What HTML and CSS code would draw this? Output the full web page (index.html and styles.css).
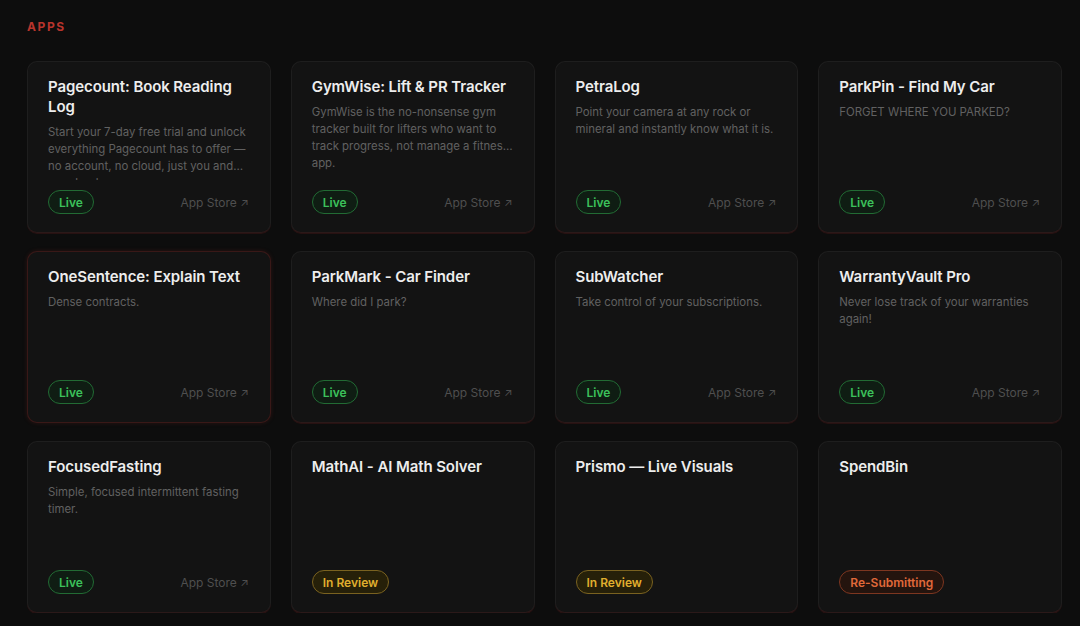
FILE: index.html
```html
<!DOCTYPE html>
<html lang="en">
<head>
<meta charset="utf-8">
<title>Apps</title>
<link rel="stylesheet" href="styles.css">
</head>
<body>
<main class="page">
  <h2 class="section-label">APPS</h2>
  <div class="grid">
    <article class="card">
      <h3 class="title">Pagecount: Book Reading Log</h3>
      <p class="desc">Start your 7-day free trial and unlock everything Pagecount has to offer — no account, no cloud, just you and your books.</p>
      <div class="foot"><span class="badge live">Live</span><a class="store">App Store <span class="arrow">↗</span></a></div>
    </article>
    <article class="card">
      <h3 class="title">GymWise: Lift &amp; PR Tracker</h3>
      <p class="desc">GymWise is the no-nonsense gym tracker built for lifters who want to track progress, not manage a fitness app.</p>
      <div class="foot"><span class="badge live">Live</span><a class="store">App Store <span class="arrow">↗</span></a></div>
    </article>
    <article class="card">
      <h3 class="title">PetraLog</h3>
      <p class="desc">Point your camera at any rock or mineral and instantly know what it is.</p>
      <div class="foot"><span class="badge live">Live</span><a class="store">App Store <span class="arrow">↗</span></a></div>
    </article>
    <article class="card">
      <h3 class="title">ParkPin - Find My Car</h3>
      <p class="desc">FORGET WHERE YOU PARKED?</p>
      <div class="foot"><span class="badge live">Live</span><a class="store">App Store <span class="arrow">↗</span></a></div>
    </article>

    <article class="card active">
      <h3 class="title">OneSentence: Explain Text</h3>
      <p class="desc">Dense contracts.</p>
      <div class="foot"><span class="badge live">Live</span><a class="store">App Store <span class="arrow">↗</span></a></div>
    </article>
    <article class="card">
      <h3 class="title">ParkMark - Car Finder</h3>
      <p class="desc">Where did I park?</p>
      <div class="foot"><span class="badge live">Live</span><a class="store">App Store <span class="arrow">↗</span></a></div>
    </article>
    <article class="card">
      <h3 class="title">SubWatcher</h3>
      <p class="desc">Take control of your subscriptions.</p>
      <div class="foot"><span class="badge live">Live</span><a class="store">App Store <span class="arrow">↗</span></a></div>
    </article>
    <article class="card">
      <h3 class="title">WarrantyVault Pro</h3>
      <p class="desc">Never lose track of your warranties again!</p>
      <div class="foot"><span class="badge live">Live</span><a class="store">App Store <span class="arrow">↗</span></a></div>
    </article>

    <article class="card">
      <h3 class="title">FocusedFasting</h3>
      <p class="desc">Simple, focused intermittent fasting timer.</p>
      <div class="foot"><span class="badge live">Live</span><a class="store">App Store <span class="arrow">↗</span></a></div>
    </article>
    <article class="card">
      <h3 class="title">MathAI - AI Math Solver</h3>
      <div class="foot"><span class="badge review">In Review</span></div>
    </article>
    <article class="card">
      <h3 class="title">Prismo — Live Visuals</h3>
      <div class="foot"><span class="badge review">In Review</span></div>
    </article>
    <article class="card">
      <h3 class="title">SpendBin</h3>
      <div class="foot"><span class="badge resub">Re-Submitting</span></div>
    </article>
  </div>
</main>
</body>
</html>
```

FILE: styles.css
```css
* { box-sizing: border-box; }
html, body {
  margin: 0;
  padding: 0;
  background: #0d0d0d;
  font-family: Inter, "Noto Sans", "Liberation Sans", sans-serif;
  color: #ececec;
}
.page {
  padding: 19px 18px 0 27px;
}
.section-label {
  margin: 0 0 26px 0;
  font-size: 12px;
  line-height: 16px;
  font-weight: 700;
  letter-spacing: 1.6px;
  color: #b8342c;
}
.grid {
  display: grid;
  grid-template-columns: repeat(4, 1fr);
  column-gap: 20px;
  row-gap: 18px;
}
.card {
  height: 172px;
  background: #131313;
  border: 1px solid #1e1e1e;
  border-bottom-color: #2b1919;
  border-radius: 10px;
  padding: 15px 21px 18px 20px;
  display: flex;
  flex-direction: column;
  box-shadow: 0 1px 0 rgba(120, 30, 30, 0.25);
  overflow: hidden;
}
.card.active {
  border-color: rgba(140, 38, 34, 0.32);
  box-shadow: 0 0 4px rgba(140, 38, 34, 0.25);
}
.title {
  margin: 0;
  font-size: 15px;
  line-height: 20px;
  font-weight: 600;
  color: #ededed;
  letter-spacing: -0.1px;
}
.desc {
  margin: 7px -3px 0 0;
  font-size: 11.4px;
  line-height: 17px;
  color: #616161;
  display: -webkit-box;
  -webkit-box-orient: vertical;
  -webkit-line-clamp: 3;
}
.foot {
  margin-top: auto;
  padding-top: 10px;
  background: #131313;
  display: flex;
  align-items: center;
  justify-content: space-between;
  position: relative;
}
.badge {
  display: inline-flex;
  align-items: center;
  height: 24px;
  padding: 0 10px;
  border-radius: 12px;
  font-size: 12px;
  font-weight: 600;
  border: 1px solid;
}
.badge.live {
  color: #3cc15b;
  border-color: #226b34;
  background: #0f1d13;
}
.badge.review {
  color: #e0af2e;
  border-color: #7a6220;
  background: #262009;
}
.badge.resub {
  color: #e0693a;
  border-color: #7d3620;
  background: #24140e;
}
.store {
  font-size: 12px;
  color: #4f4f4f;
  text-decoration: none;
}
.arrow {
  font-size: 11px;
}
```
